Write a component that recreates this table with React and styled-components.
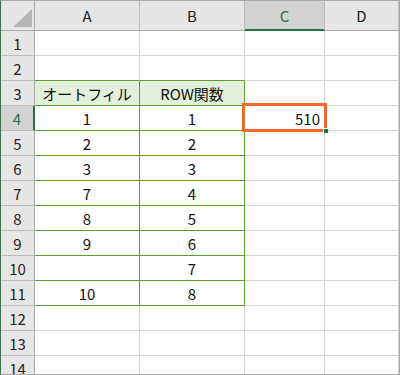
import React from "react";
import styled, { createGlobalStyle } from "styled-components";

const Global = createGlobalStyle`
  html, body { margin: 0; padding: 0; background: #fff; }
  body { font-family: "Noto Sans CJK JP", "Noto Sans", sans-serif; }
`;

const GRID = "#d4d4d4";
const TABLE = "#5b9e2b";
const HEAD_BG = "#e6e6e6";
const HEAD_SEL = "#d2d2d2";
const HEAD_LINE = "#bcbcbc";
const XL_GREEN = "#217346";

const Frame = styled.div`
  width: 400px;
  height: 375px;
  box-sizing: border-box;
  border-top: 1px solid #a8a8a8;
  border-right: 1px solid #a8a8a8;
  border-bottom: 1px solid #a8a8a8;
  border-left: 1px solid #40704f;
  overflow: hidden;
  background: #fff;
`;

const Sheet = styled.div`
  display: grid;
  grid-template-columns: 34px 105px 105px 80px 74px;
  grid-template-rows: 30px;
  grid-auto-rows: 25px;
  font-size: 15px;
  color: #111;
`;

const Corner = styled.div`
  box-sizing: border-box;
  background: ${HEAD_BG};
  border-right: 1px solid #a9a9a9;
  border-bottom: 1px solid #a9a9a9;
  display: flex;
  align-items: flex-end;
  justify-content: flex-end;
  padding: 0 2px 3px 0;
`;

const ColHead = styled.div`
  box-sizing: border-box;
  background: ${(p) => (p.$sel ? HEAD_SEL : HEAD_BG)};
  border-right: 1px solid ${HEAD_LINE};
  border-bottom: ${(p) => (p.$sel ? `2px solid ${XL_GREEN}` : "1px solid #a9a9a9")};
  display: flex;
  align-items: center;
  justify-content: center;
  color: ${(p) => (p.$sel ? XL_GREEN : "#222")};
  padding-top: ${(p) => (p.$sel ? "1px" : "0")};
`;

const RowHead = styled.div`
  box-sizing: border-box;
  background: ${(p) => (p.$sel ? HEAD_SEL : HEAD_BG)};
  border-right: ${(p) => (p.$sel ? `2px solid ${XL_GREEN}` : "1px solid #a9a9a9")};
  border-bottom: 1px solid ${HEAD_LINE};
  display: flex;
  align-items: center;
  justify-content: center;
  color: ${(p) => (p.$sel ? XL_GREEN : "#222")};
`;

const Cell = styled.div`
  box-sizing: border-box;
  position: relative;
  background: ${(p) => (p.$fill ? "#e2efda" : "#fff")};
  border-right: 1px solid ${(p) => (p.$rightColor ? p.$rightColor : GRID)};
  border-bottom: 1px solid ${(p) => (p.$bottomColor ? p.$bottomColor : GRID)};
  display: flex;
  align-items: center;
  justify-content: ${(p) => (p.$align === "right" ? "flex-end" : "center")};
  padding: 0 4px;
  white-space: nowrap;
`;

/* active-cell outline, drawn above the neighbouring cells */
const Selection = styled.div`
  position: absolute;
  z-index: 2;
  top: -3px;
  left: -3px;
  right: -3px;
  bottom: -2px;
  border: 3px solid #ef6a2c;
  box-sizing: border-box;
  pointer-events: none;
`;

const FillHandle = styled.div`
  position: absolute;
  z-index: 3;
  right: -4px;
  bottom: -3px;
  width: 4px;
  height: 4px;
  background: ${XL_GREEN};
  border-left: 1px solid #fff;
  border-top: 1px solid #fff;
`;

const CornerMark = () => (
  <svg width="19" height="18" viewBox="0 0 19 18">
    <polygon points="19,0 19,18 0,18" fill="#b5b5b5" />
  </svg>
);

const cols = ["A", "B", "C", "D"];

// table body rows 3..11 in columns A and B
const tableRows = {
  3: ["オートフィル", "ROW関数"],
  4: ["1", "1"],
  5: ["2", "2"],
  6: ["3", "3"],
  7: ["7", "4"],
  8: ["8", "5"],
  9: ["9", "6"],
  10: ["", "7"],
  11: ["10", "8"],
};

export default function App() {
  const rows = Array.from({ length: 14 }, (_, i) => i + 1);
  return (
    <>
      <Global />
      <Frame>
        <Sheet>
          <Corner>
            <CornerMark />
          </Corner>
          {cols.map((c) => (
            <ColHead key={c} $sel={c === "C"}>
              {c}
            </ColHead>
          ))}
          {rows.map((r) => {
            const inTable = r >= 3 && r <= 11;
            const aboveTable = r === 2;
            const data = tableRows[r];
            return (
              <React.Fragment key={r}>
                <RowHead $sel={r === 4}>{r}</RowHead>
                {cols.map((c, ci) => {
                  const tableCol = ci < 2;
                  const green = tableCol && (inTable || aboveTable);
                  return (
                    <Cell
                      key={c}
                      $fill={tableCol && r === 3}
                      $bottomColor={green ? TABLE : undefined}
                      $rightColor={tableCol && inTable ? TABLE : undefined}
                      $align={c === "C" ? "right" : "center"}
                    >
                      {tableCol && data ? data[ci] : null}
                      {c === "C" && r === 4 && (
                        <>
                          510
                          <Selection />
                          <FillHandle />
                        </>
                      )}
                    </Cell>
                  );
                })}
              </React.Fragment>
            );
          })}
        </Sheet>
      </Frame>
    </>
  );
}
